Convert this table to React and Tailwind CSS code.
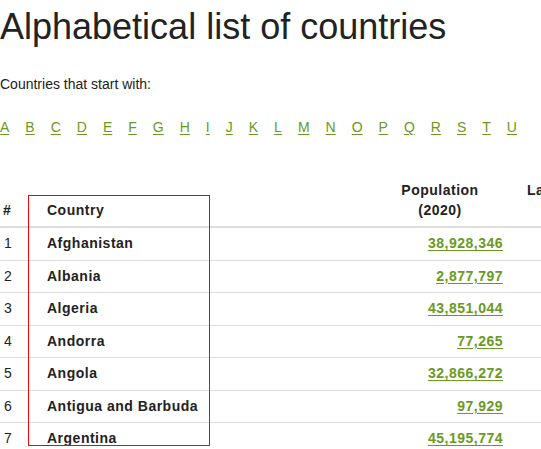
const letters = "ABCDEFGHIJKLMNOPQRSTU".split("");

const rows = [
  ["1", "Afghanistan", "38,928,346"],
  ["2", "Albania", "2,877,797"],
  ["3", "Algeria", "43,851,044"],
  ["4", "Andorra", "77,265"],
  ["5", "Angola", "32,866,272"],
  ["6", "Antigua and Barbuda", "97,929"],
  ["7", "Argentina", "45,195,774"],
];

export default function App() {
  return (
    <div className="relative w-[541px] h-[449px] overflow-hidden bg-white text-[#222] font-['Liberation_Sans',Arial,sans-serif]">
      <h1 className="mt-[7px] text-[36px] leading-[40px] font-normal whitespace-nowrap">
        Alphabetical list of countries
      </h1>

      <p className="mt-[27px] text-[14px] leading-[20px]">Countries that start with:</p>

      <div className="mt-[23px] flex gap-[16px] text-[14px] leading-[20px] whitespace-nowrap">
        {letters.map((l) => (
          <a key={l} href="#" className="text-[#6a9a22] underline underline-offset-2">
            {l}
          </a>
        ))}
      </div>

      {/* table */}
      <div className="mt-[37px] w-[700px] text-[14px] leading-[20px]">
        <div className="flex items-end pt-[6px] pb-[6px] border-b-2 border-[#ddd] font-bold tracking-[0.5px]">
          <div className="w-[47px] pl-[3px]">#</div>
          <div className="w-[330px]">Country</div>
          <div className="w-[126px] text-center">
            Population
            <br />
            (2020)
          </div>
          <div className="pl-[24px] self-start">Land Area (Km²)</div>
        </div>

        {rows.map(([n, name, pop]) => (
          <div key={n} className="flex py-[6px] leading-[19.5px] border-b border-[#ddd]">
            <div className="w-[47px] pl-[4px]">{n}</div>
            <div className="w-[330px] font-bold tracking-[0.5px]">{name}</div>
            <div className="w-[126px] text-right">
              <a href="#" className="font-bold tracking-[0.5px] text-[#6a9a22] underline underline-offset-2">
                {pop}
              </a>
            </div>
          </div>
        ))}
      </div>

      {/* highlight box */}
      <div className="absolute left-[28px] top-[195px] w-[182px] h-[251px] border border-[#f00] pointer-events-none" />
    </div>
  );
}
